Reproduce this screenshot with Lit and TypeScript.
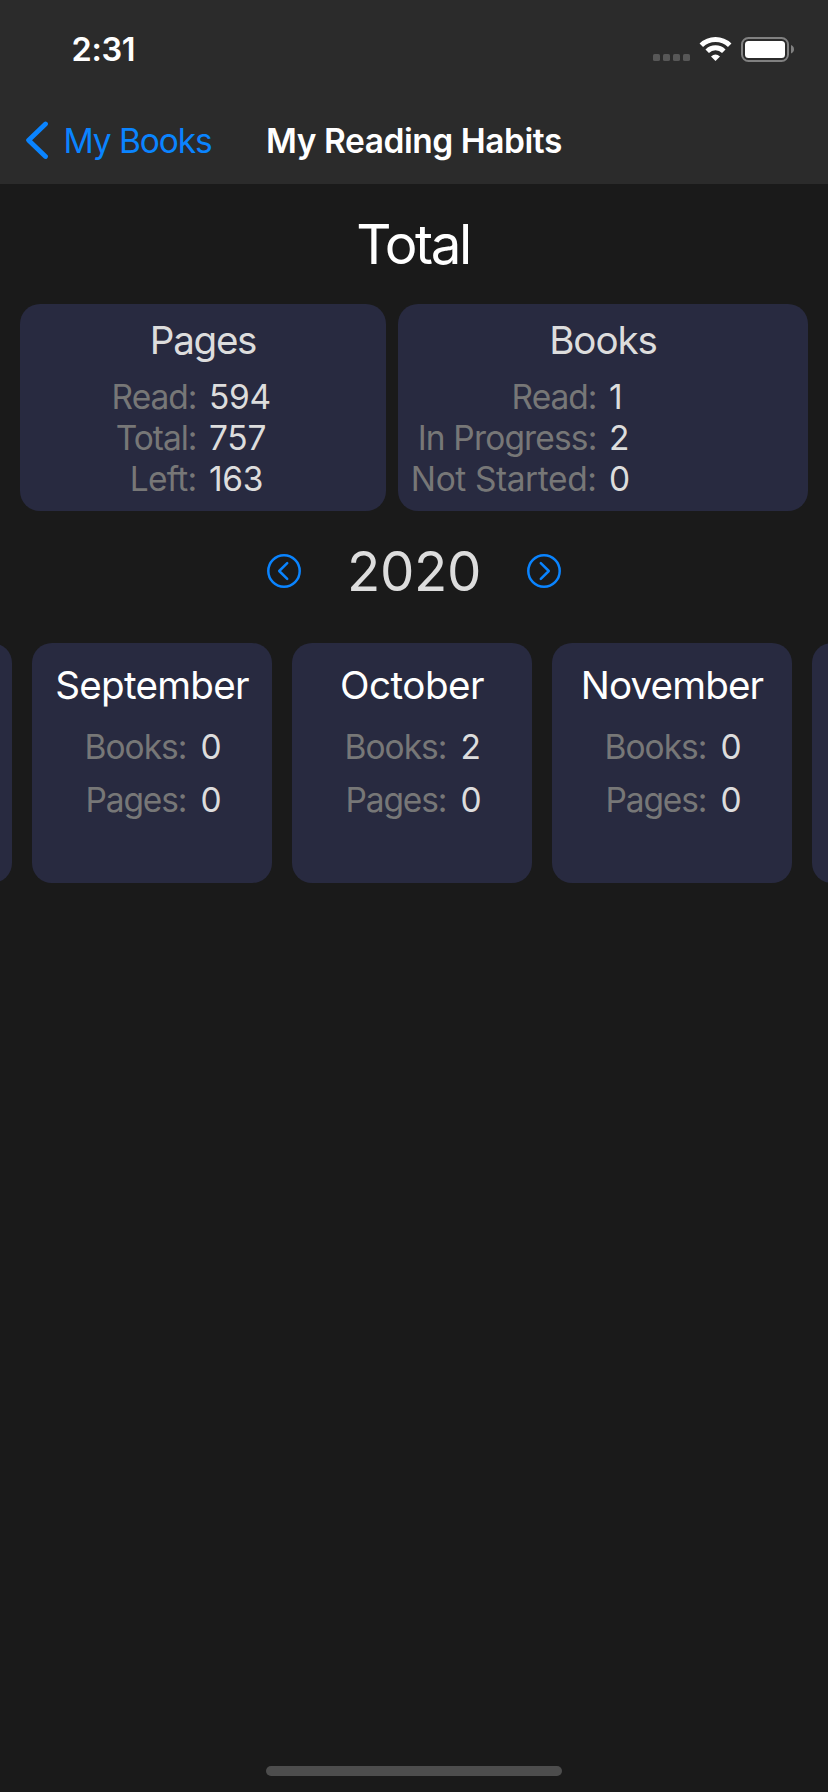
import { LitElement, html, css, svg } from "lit";
import { customElement, property, state } from "lit/decorators.js";

interface Stat { label: string; value: number; }

const slug = (s: string) => s.toLowerCase().replace(/[^a-z]+/g, "-").replace(/-$/, "");

@customElement("stat-card")
class StatCard extends LitElement {
  @property() heading = "";
  @property({ attribute: false }) stats: Stat[] = [];

  static styles = css`
    :host {
      display: block;
      box-sizing: border-box;
      background: #282a40;
      border-radius: 20px;
      color: #dddddd;
      white-space: nowrap;
    }
    .heading {
      height: 72px;
      line-height: 72px;
      font-size: 38.6px;
      text-align: center;
    }
    .rows {
      display: grid;
      grid-template-columns: 1fr 1fr;
      column-gap: 12px;
      grid-auto-rows: 41px;
      line-height: 42px;
      font-size: 33.5px;
    }
    .label {
      justify-self: end;
      padding-right: 0.5px;
      color: #777777;
    }
    :host([month]) .heading { height: 84px; line-height: 84px; color: #ffffff; }
    :host([month]) .rows {
      grid-template-columns: auto 21px;
      justify-content: center;
      column-gap: 13.5px;
      row-gap: 13px;
      grid-auto-rows: 40px;
      line-height: 41px;
      padding-left: 2px;
    }
    .h-pages { letter-spacing: -1.3px; }
    .h-books { letter-spacing: -1.09px; }
    .h-september { letter-spacing: -0.73px; }
    .h-october { letter-spacing: -0.5px; }
    .h-november { letter-spacing: -0.87px; }
    .l-read, .l-total { letter-spacing: -1px; }
    .l-left { letter-spacing: -0.7px; }
    .l-in-progress { letter-spacing: -0.84px; }
    .l-not-started { letter-spacing: -0.41px; }
    .l-books { letter-spacing: -1px; }
    .l-pages { letter-spacing: -1.1px; }
    .value { letter-spacing: -0.3px; }
  `;

  render() {
    return html`
      <div class="heading h-${slug(this.heading)}">${this.heading}</div>
      <div class="rows">
        ${this.stats.map((s) => html`
          <span class="label l-${slug(s.label)}">${s.label}:</span>
          <span class="value">${s.value}</span>`)}
      </div>`;
  }
}

@customElement("app-root")
class AppRoot extends LitElement {
  @state() private year = 2020;

  private pages: Stat[] = [
    { label: "Read", value: 594 },
    { label: "Total", value: 757 },
    { label: "Left", value: 163 },
  ];
  private books: Stat[] = [
    { label: "Read", value: 1 },
    { label: "In Progress", value: 2 },
    { label: "Not Started", value: 0 },
  ];
  private months = [
    { name: "September", books: 0, pages: 0 },
    { name: "October", books: 2, pages: 0 },
    { name: "November", books: 0, pages: 0 },
  ];

  static styles = css`
    :host {
      display: flex;
      flex-direction: column;
      width: 828px;
      height: 1792px;
      overflow: hidden;
      background: #1a1a1a;
      color: #ffffff;
      font-family: Inter, "Liberation Sans", sans-serif;
    }
    svg { display: block; }
    .top { background: #2b2b2b; height: 184px; flex: none; }
    .status {
      box-sizing: border-box;
      display: flex;
      justify-content: space-between;
      align-items: center;
      height: 96px;
      padding: 2px 33px 0 71.5px;
    }
    .time { font-size: 32.5px; font-weight: 600; letter-spacing: -0.33px; line-height: 40px; padding-top: 2px; }
    .nav {
      display: grid;
      grid-template-columns: 1fr auto 1fr;
      align-items: center;
      height: 88px;
      font-size: 33.5px;
      line-height: 40px;
      white-space: nowrap;
    }
    .back { display: flex; align-items: center; gap: 13.5px; padding-left: 26px; color: #0a84ff; letter-spacing: -1.08px; }
    .back-text, .title { padding-top: 1px; }
    .title { font-weight: 600; letter-spacing: -0.45px; }
    .total {
      height: 120px;
      line-height: 121px;
      text-align: center;
      font-size: 54.6px;
      letter-spacing: -2.45px;
      padding-right: 2px;
      flex: none;
    }
    .summary {
      display: grid;
      grid-template-columns: 366px 410px;
      gap: 12px;
      height: 207px;
      padding: 0 20px;
      flex: none;
    }
    .year {
      display: flex;
      align-items: center;
      justify-content: space-between;
      width: 294px;
      height: 120px;
      margin: 0 auto 12px;
      flex: none;
      color: #dddddd;
      font-size: 54.6px;
      letter-spacing: -0.34px;
    }
    .months { display: flex; gap: 20px; margin-left: -228px; flex: none; }
    .months > * { width: 240px; height: 240px; flex: none; }
    .home { width: 296px; height: 10px; border-radius: 5px; background: #4d4d4d; margin: auto auto 16px; }
  `;

  private chevron(points: string) {
    return html`<svg width="34" height="34" viewBox="0 0 34 34" fill="none" stroke="#0a84ff" stroke-width="2.5" stroke-linecap="round" stroke-linejoin="round">
      <circle cx="17" cy="17" r="15.7"/>${svg`<polyline points=${points}/>`}</svg>`;
  }

  render() {
    return html`
      <header class="top">
        <div class="status">
          <span class="time">2:31</span>
          <svg width="142" height="26" viewBox="653 36 142 26">
            <g fill="#575757">
              <rect x="653" y="54" width="7" height="7" rx="1.6"/>
              <rect x="663" y="54" width="7" height="7" rx="1.6"/>
              <rect x="673" y="54" width="7" height="7" rx="1.6"/>
              <rect x="683" y="54" width="7" height="7" rx="1.6"/>
            </g>
            <g fill="none" stroke="#fff" stroke-width="5">
              <path d="M701.3 45.2 A20.3 20.3 0 0 1 729.7 45.2"/>
              <path d="M707.2 51.2 A11.9 11.9 0 0 1 723.8 51.2"/>
            </g>
            <path d="M715.5 61 L711 56.6 Q715.5 52.4 720 56.6 Z" fill="#fff"/>
            <rect x="742" y="38" width="46" height="23" rx="6.5" fill="none" stroke="#818181" stroke-width="2"/>
            <rect x="745" y="41" width="40" height="17" rx="3.5" fill="#fff"/>
            <path d="M791 45 Q794 46.2 794 49.2 Q794 52.3 791 53.5 Z" fill="#818181"/>
          </svg>
        </div>
        <nav class="nav">
          <span class="back">
            <svg width="24" height="40" viewBox="26 120 24 40" fill="none" stroke="#0a84ff" stroke-width="4.8" stroke-linecap="round" stroke-linejoin="round">
              <polyline points="45.5,124 28.6,140.2 45.5,156.5"/>
            </svg>
            <span class="back-text">My Books</span>
          </span>
          <span class="title">My Reading Habits</span>
        </nav>
      </header>
      <div class="total">Total</div>
      <section class="summary">
        <stat-card heading="Pages" .stats=${this.pages}></stat-card>
        <stat-card heading="Books" .stats=${this.books}></stat-card>
      </section>
      <div class="year">
        ${this.chevron("20.2,9.2 12.2,17 20.2,24.8")}
        <span>${this.year}</span>
        ${this.chevron("13.8,9.2 21.8,17 13.8,24.8")}
      </div>
      <section class="months">
        <stat-card month></stat-card>
        ${this.months.map((m) => html`
          <stat-card month heading=${m.name} .stats=${[{ label: "Books", value: m.books }, { label: "Pages", value: m.pages }]}></stat-card>`)}
        <stat-card month></stat-card>
      </section>
      <div class="home"></div>`;
  }
}
